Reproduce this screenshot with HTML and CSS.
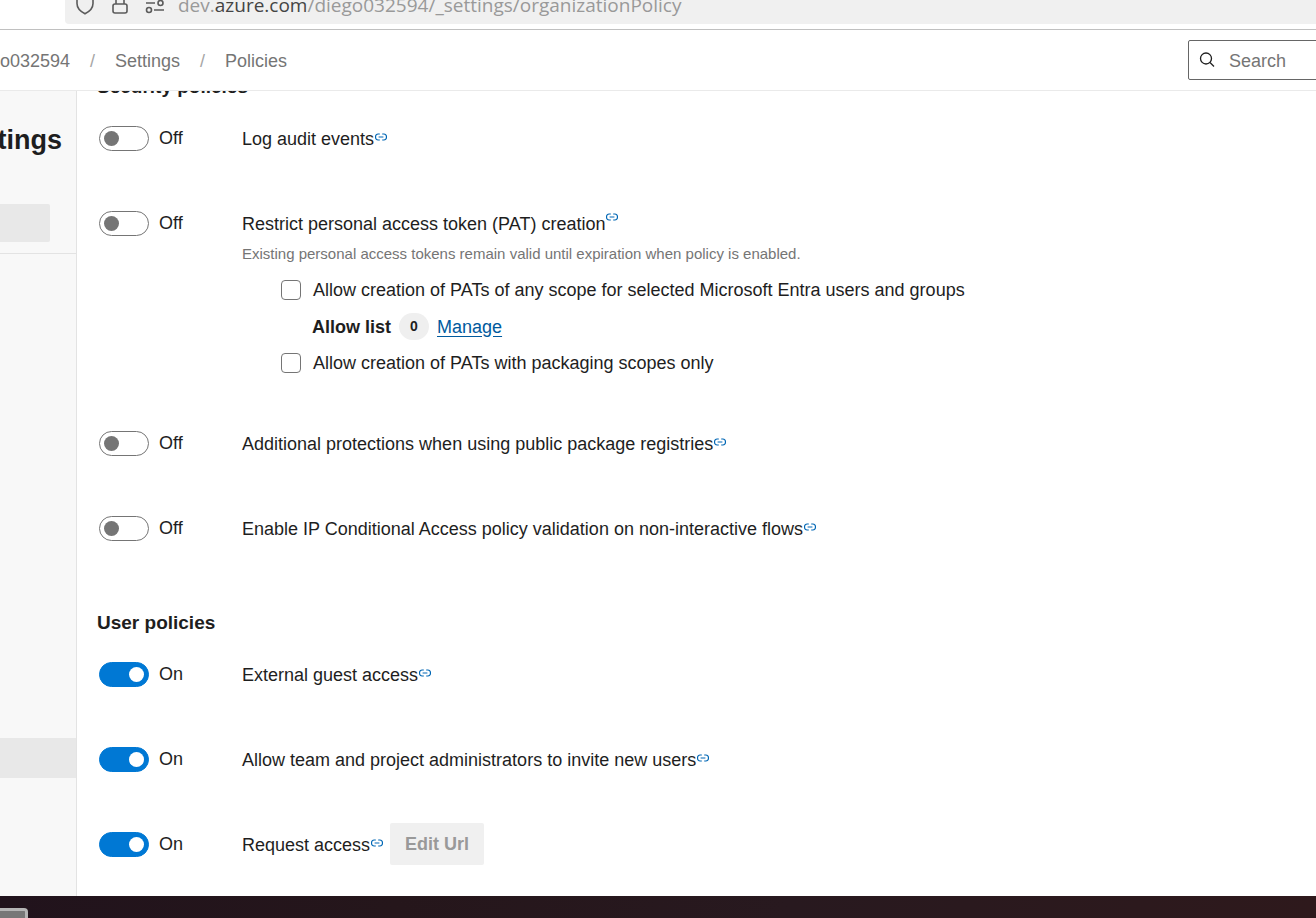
FILE: index.html
```html
<!DOCTYPE html>
<html lang="en">
<head>
    <meta charset="UTF-8">
    <meta name="viewport" content="width=device-width, initial-scale=1.0">
    <title>Policies - Settings</title>
    <link rel="stylesheet" href="styles.css">
</head>
<body>

    <!-- Link glyph shared by all policies -->
    <svg class="symbols" aria-hidden="true">
        <symbol id="link" viewBox="0 0 12 8">
            <path d="M4.8 1H3.2a2.600 2.600 0 0 0-2.600 3 2.600 2.600 0 0 0 2.600 3h1.600M7.200 1h1.600a2.600 2.600 0 0 1 2.600 3 2.600 2.600 0 0 1-2.600 3H7.200M3.600 4h4.800" fill="none" stroke="currentColor" stroke-width="1.200"/>
        </symbol>
    </svg>

    <div class="browser-bar">
        <div class="address">
            <svg class="address-icon" width="20" height="20" viewBox="0 0 20 20">
                <path d="M10 1.5L18 4v4.500c0 4.500-3.500 8-8 10.300C5.500 16.500 2 13 2 8.500V4z"/>
            </svg>
            <svg class="address-icon" width="20" height="20" viewBox="0 0 20 20">
                <rect x="3" y="9" width="14" height="9" rx="2"/>
                <path d="M6 9V5a4 4 0 0 1 8 0v4"/>
            </svg>
            <svg class="address-icon" width="20" height="20" viewBox="0 0 20 20">
                <path d="M1 8h9M9 15h10"/>
                <circle cx="15.500" cy="8" r="2.500"/>
                <circle cx="4" cy="15" r="2.500"/>
            </svg>
            <span class="url">dev.<b>azure.com</b>/diego032594/_settings/organizationPolicy</span>
        </div>
    </div>

    <header class="header">
        <nav class="breadcrumb">
            <a href="#" class="crumb-org">diego032594</a>
            <span class="slash">/</span>
            <a href="#">Settings</a>
            <span class="slash">/</span>
            <a href="#">Policies</a>
        </nav>
        <div class="search">
            <svg width="16" height="16" viewBox="0 0 16 16">
                <circle cx="7" cy="6.500" r="5.500"/>
                <path d="M11 10.500l4 4"/>
            </svg>
            <input type="text" placeholder="Search" aria-label="Search">
        </div>
    </header>

    <div class="page">
        <aside class="sidebar">
            <h1>Settings</h1>
            <div class="filter"></div>
            <div class="nav-list">
                <div class="nav-active"></div>
            </div>
        </aside>

        <main class="content">
            <section>
                <h2>Security policies</h2>
                <div class="policy">
                    <label class="toggle"><input type="checkbox" role="switch">Off</label>
                    <div class="policy-title">Log audit events<a href="#" aria-label="Learn more"><svg class="link"><use href="#link"/></svg></a></div>
                </div>
                <div class="policy">
                    <label class="toggle"><input type="checkbox" role="switch">Off</label>
                    <div class="policy-body">
                        <div class="policy-title raised">Restrict personal access token (PAT) creation<a href="#" aria-label="Learn more"><svg class="link"><use href="#link"/></svg></a></div>
                        <p class="hint">Existing personal access tokens remain valid until expiration when policy is enabled.</p>
                        <div class="options">
                            <label class="check"><input type="checkbox">Allow creation of PATs of any scope for selected Microsoft Entra users and groups</label>
                            <div class="allow-list">
                                <strong>Allow list</strong>
                                <span class="count">0</span>
                                <a href="#">Manage</a>
                            </div>
                            <label class="check"><input type="checkbox">Allow creation of PATs with packaging scopes only</label>
                        </div>
                    </div>
                </div>
                <div class="policy">
                    <label class="toggle"><input type="checkbox" role="switch">Off</label>
                    <div class="policy-title">Additional protections when using public package registries<a href="#" aria-label="Learn more"><svg class="link"><use href="#link"/></svg></a></div>
                </div>
                <div class="policy">
                    <label class="toggle"><input type="checkbox" role="switch">Off</label>
                    <div class="policy-title">Enable IP Conditional Access policy validation on non-interactive flows<a href="#" aria-label="Learn more"><svg class="link"><use href="#link"/></svg></a></div>
                </div>
            </section>

            <section>
                <h2>User policies</h2>
                <div class="policy">
                    <label class="toggle"><input type="checkbox" role="switch" checked>On</label>
                    <div class="policy-title">External guest access<a href="#" aria-label="Learn more"><svg class="link"><use href="#link"/></svg></a></div>
                </div>
                <div class="policy">
                    <label class="toggle"><input type="checkbox" role="switch" checked>On</label>
                    <div class="policy-title">Allow team and project administrators to invite new users<a href="#" aria-label="Learn more"><svg class="link"><use href="#link"/></svg></a></div>
                </div>
                <div class="policy">
                    <label class="toggle"><input type="checkbox" role="switch" checked>On</label>
                    <div class="policy-title">Request access<a href="#" aria-label="Learn more"><svg class="link"><use href="#link"/></svg></a></div>
                    <button class="edit-url" disabled>Edit Url</button>
                </div>
            </section>
        </main>
    </div>

    <footer class="desktop">
        <div class="dock-item"></div>
    </footer>

</body>
</html>
```
FILE: styles.css
```css
* {
    box-sizing: border-box;
}

body {
    margin: 0;
    height: 100vh;
    display: flex;
    flex-direction: column;
    overflow: hidden;
    background: #fff;
    color: #1e1e1e;
    font-family: "Liberation Sans", Arial, sans-serif;
    font-size: 18px;
    line-height: 24px;
}

h1, h2, p {
    margin: 0;
}

a {
    color: #005a9e;
}

.symbols {
    display: none;
}

/* Browser address bar */
.browser-bar {
    flex: none;
    height: 30px;
    padding-left: 65px;
    border-bottom: 1px solid #c0c0c0;
}

.address {
    height: 24px;
    padding-left: 10px;
    display: flex;
    align-items: flex-end;
    gap: 15px;
    overflow: hidden;
    background: #f0f0f0;
    border-bottom-left-radius: 4px;
}

.address-icon {
    flex: none;
    margin-bottom: 9px;
    fill: none;
    stroke: #5b5b5b;
    stroke-width: 1.6;
}

.url {
    margin: 0 0 7px -2px;
    color: #999;
    font-family: "Open Sans", sans-serif;
    font-size: 19px;
    white-space: nowrap;
}

.url b {
    color: #444;
    font-weight: normal;
}

/* Header */
.header {
    flex: none;
    height: 61px;
    display: flex;
    align-items: center;
    justify-content: space-between;
    border-bottom: 1px solid #eaeaea;
    overflow: hidden;
}

.breadcrumb {
    padding-top: 2px;
    display: flex;
    gap: 20px;
}

.breadcrumb a {
    color: #757575;
    text-decoration: none;
}

.breadcrumb .crumb-org {
    width: 70px;
    display: flex;
    justify-content: flex-end;
}

.slash {
    color: #a6a6a6;
}

.search {
    width: 140px;
    height: 40px;
    margin-right: -12px;
    padding-left: 10px;
    display: flex;
    align-items: center;
    gap: 14px;
    border: 1px solid #666;
    border-radius: 2px;
}

.search svg {
    flex: none;
    fill: none;
    stroke: #1e1e1e;
    stroke-width: 1.3;
}

.search input {
    width: 100%;
    min-width: 0;
    padding: 2px 0 0;
    border: 0;
    outline: 0;
    background: none;
    font: inherit;
}

.search input::placeholder {
    color: #757575;
}

/* Sidebar */
.page {
    flex: 1;
    min-height: 0;
    display: flex;
    overflow: hidden;
}

.sidebar {
    flex: none;
    width: 77px;
    overflow: hidden;
    background: #f8f8f8;
    border-right: 1px solid #e3e3e3;
}

.sidebar h1 {
    padding: 34px 14px 0 0;
    display: flex;
    justify-content: flex-end;
    font-size: 27px;
    line-height: 30px;
}

.filter {
    height: 38px;
    margin: 49px 26px 11px 0;
    background: #e8e8e8;
    border-radius: 0 2px 2px 0;
}

.nav-list {
    padding-top: 484px;
    border-top: 1px solid #e3e3e3;
}

.nav-active {
    height: 40px;
    background: #e8e8e8;
}

/* Policies */
.content {
    flex: 1;
    min-width: 0;
    margin-top: -16px;
    padding-left: 20px;
    clip-path: inset(16px 0 0 0);
}

h2 {
    margin-bottom: 18px;
    font-size: 19px;
    line-height: 24px;
}

section {
    margin-bottom: 62px;
}

.policy {
    display: flex;
    align-items: flex-start;
    padding-left: 2px;
}

.policy + .policy {
    margin-top: 43px;
}

.toggle {
    flex: none;
    width: 143px;
    height: 42px;
    display: flex;
    align-items: center;
    gap: 10px;
}

.toggle input {
    appearance: none;
    width: 50px;
    height: 25px;
    margin: 0;
    padding: 4px;
    display: flex;
    border: 1px solid #757575;
    border-radius: 13px;
}

.toggle input::before {
    content: "";
    width: 15px;
    height: 15px;
    border-radius: 50%;
    background: #757575;
}

.toggle input:checked {
    justify-content: flex-end;
    background: #0078d4;
    border-color: #0078d4;
}

.toggle input:checked::before {
    background: #fff;
}

.policy-title {
    height: 42px;
    padding-top: 1px;
    display: flex;
    align-items: center;
}

.policy-title a {
    display: flex;
    margin: 0 0 3px 1px;
    color: #0067b5;
}

.raised a {
    margin-bottom: 14px;
}

.link {
    width: 12px;
    height: 8px;
}

.hint {
    color: #757575;
    font-size: 15px;
    line-height: 20px;
}

.options {
    padding: 16px 0 6px 39px;
    display: flex;
    flex-direction: column;
    align-items: flex-start;
    gap: 13px;
}

.check {
    display: flex;
    gap: 12px;
    line-height: 20px;
}

.check input {
    appearance: none;
    width: 20px;
    height: 20px;
    margin: 0;
    border: 1px solid #757575;
    border-radius: 4px;
}

.allow-list {
    padding-left: 31px;
    display: flex;
    align-items: center;
    gap: 8px;
}

.allow-list a {
    text-underline-offset: 3px;
}

.count {
    width: 30px;
    border-radius: 14px;
    background: #efefef;
    font-size: 14px;
    font-weight: bold;
    line-height: 27px;
    text-align: center;
}

.edit-url {
    width: 94px;
    height: 42px;
    margin-left: 7px;
    border: 0;
    border-radius: 2px;
    background: #f0f0f0;
    color: #999;
    font: bold 18px "Liberation Sans", Arial, sans-serif;
}

/* Strip of wallpaper under the window */
.desktop {
    flex: none;
    height: 22px;
    padding-top: 12px;
    background: linear-gradient(to right, #21131c, #25161b 30%, #28191f 60%, #2e191c);
}

.dock-item {
    width: 28px;
    height: 10px;
    border: solid #b5b5b5;
    border-width: 3px 3px 0 0;
    border-top-right-radius: 4px;
    background: #777;
}
```
